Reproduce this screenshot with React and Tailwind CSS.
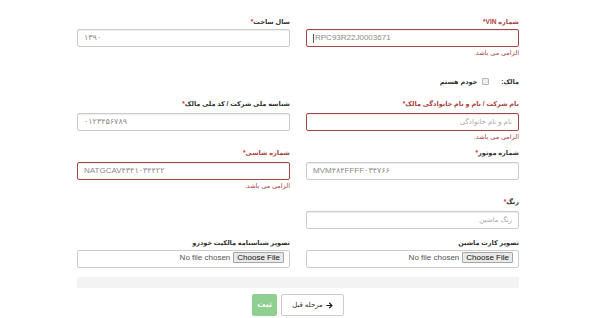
import { FaArrowRight } from 'react-icons/fa';

const inputBase =
  'h-[18px] w-full rounded-[2px] border bg-white px-[6px] text-[8px] leading-[16px] shadow-[inset_0_1px_1px_rgba(0,0,0,0.075)]';

function Label({ text, error }) {
  return (
    <div className={`pt-px text-[6.5px] leading-[10px] font-bold ${error ? 'text-[#a94442]' : 'text-[#333]'}`}>
      {text}
      <span className="text-[#e0262b]">*</span>
    </div>
  );
}

function Field({ label, value, placeholder, error, focused, showError, ltr, inputTop = 'mt-[4px]' }) {
  return (
    <div>
      <Label text={label} error={error} />
      <div
        className={`${inputBase} ${inputTop} ${error ? 'border-[#a94442]' : 'border-[#ccc]'} ${
          focused ? 'shadow-[0_0_3px_rgba(206,132,131,0.9)]' : ''
        } flex items-center`}
        dir={ltr ? 'ltr' : 'rtl'}
      >
        {focused && <span className="w-px h-[9px] bg-[#555] mr-px" />}
        <span className={value ? 'text-[#8a8a8a]' : 'text-[#aaa] text-[7px]'}>{value || placeholder}</span>
      </div>
      {showError && (
        <div className="text-[6.5px] leading-[10px] text-[#a94442] mt-px">الزامی می باشد.</div>
      )}
    </div>
  );
}

function FileField({ label }) {
  return (
    <div>
      <div className="pt-px text-[6.5px] leading-[10px] font-bold text-[#333]">{label}</div>
      <div className="mt-[2px] h-[18px] rounded-[2px] border border-[#ccc] flex items-start pt-[1px] pr-[5px] gap-[3px]">
        <div className="h-[11px] px-[3px] border border-[#a6a6a6] bg-[#e9e9e9] rounded-[1px] text-[8px] leading-[9px] text-[#111]">
          Choose File
        </div>
        <div className="text-[8px] leading-[11px] text-[#555]">No file chosen</div>
      </div>
    </div>
  );
}

export default function App() {
  return (
    <div className="w-[600px] h-[318px] bg-white overflow-hidden font-['Liberation_Sans','DejaVu_Sans',sans-serif]">
      <div dir="rtl" className="ml-[77px] w-[442px] pt-[16px]">
        <div className="grid grid-cols-2 gap-x-[16px] h-[60px]">
          <Field label="شماره VIN" value="RPC93R22J0003671" error focused showError ltr inputTop="mt-[2px]" />
          <Field label="سال ساخت" value="۱۳۹۰" ltr inputTop="mt-[2px]" />
        </div>

        <div className="h-[22px] flex items-start">
          <div className="flex items-center h-[10px] pt-px text-[6.5px] leading-[10px]">
            <span className="font-bold text-[#333]">مالک:</span>
            <span className="mr-[12px] w-[7px] h-[7px] border border-[#b5b5b5] bg-[#eee] rounded-[1px]" />
            <span className="mr-[5px] font-bold text-[#333]">خودم هستم</span>
          </div>
        </div>

        <div className="grid grid-cols-2 gap-x-[16px] h-[49px]">
          <Field
            label="نام شرکت / نام و نام خانوادگی مالک"
            placeholder="نام و نام خانوادگی"
            error
            showError
          />
          <Field label="شناسه ملی شرکت / کد ملی مالک" value="۰۱۲۳۴۵۶۷۸۹" ltr />
        </div>

        <div className="grid grid-cols-2 gap-x-[16px] h-[49px]">
          <Field label="شماره موتور" value="MVM۴۸۴FFFF۰۳۴۷۶۶" ltr />
          <Field label="شماره شاسی" value="NATGCAV۴۳۴۱۰۳۴۴۲۲" error showError ltr />
        </div>

        <div className="grid grid-cols-2 gap-x-[16px] h-[41px]">
          <Field label="رنگ" placeholder="رنگ ماشین" />
          <div />
        </div>

        <div className="grid grid-cols-2 gap-x-[16px]">
          <FileField label="تصویر کارت ماشین" />
          <FileField label="تصویر شناسنامه مالکیت خودرو" />
        </div>

        <div className="mt-[9px] h-[11px] bg-[#f3f3f3] rounded-[2px]" />

        <div className="mt-[6px] flex justify-center gap-[4px]">
          <button className="h-[22px] px-[10px] border border-[#ccc] rounded-[2px] bg-white flex items-center gap-[3px] text-[7px] text-[#333]">
            <FaArrowRight className="w-[7px] h-[7px] text-[#111]" />
            <span>مرحله قبل</span>
          </button>
          <button className="h-[22px] w-[25px] rounded-[2px] bg-[#8fcf8f] text-white text-[8px] font-bold">ثبت</button>
        </div>
      </div>
    </div>
  );
}
